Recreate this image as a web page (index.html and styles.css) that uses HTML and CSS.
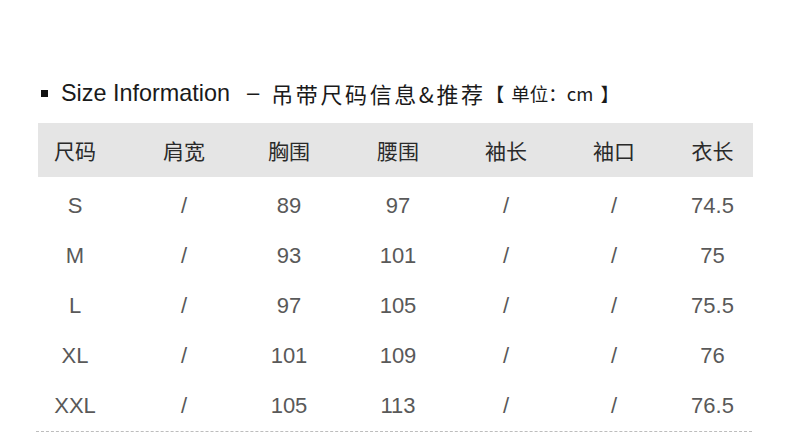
FILE: index.html
```html
<!DOCTYPE html>
<html lang="zh">
<head>
<meta charset="utf-8">
<link rel="stylesheet" href="styles.css">
</head>
<body>
<div class="page">
  <div class="title">
    <span class="bullet"></span>
    <span class="en">Size Information</span>
    <span class="dash">–</span>
    <span class="cn">吊带尺码信息&amp;推荐</span>
    <span class="unit">【 单位：cm 】</span>
  </div>
  <div class="table">
    <div class="row head">
      <div class="cell first">尺码</div>
      <div class="cell">肩宽</div>
      <div class="cell">胸围</div>
      <div class="cell">腰围</div>
      <div class="cell">袖长</div>
      <div class="cell">袖口</div>
      <div class="cell">衣长</div>
    </div>
    <div class="row">
      <div class="cell first">S</div><div class="cell">/</div><div class="cell">89</div><div class="cell">97</div><div class="cell">/</div><div class="cell">/</div><div class="cell">74.5</div>
    </div>
    <div class="row">
      <div class="cell first">M</div><div class="cell">/</div><div class="cell">93</div><div class="cell">101</div><div class="cell">/</div><div class="cell">/</div><div class="cell">75</div>
    </div>
    <div class="row">
      <div class="cell first">L</div><div class="cell">/</div><div class="cell">97</div><div class="cell">105</div><div class="cell">/</div><div class="cell">/</div><div class="cell">75.5</div>
    </div>
    <div class="row">
      <div class="cell first">XL</div><div class="cell">/</div><div class="cell">101</div><div class="cell">109</div><div class="cell">/</div><div class="cell">/</div><div class="cell">76</div>
    </div>
    <div class="row">
      <div class="cell first">XXL</div><div class="cell">/</div><div class="cell">105</div><div class="cell">113</div><div class="cell">/</div><div class="cell">/</div><div class="cell">76.5</div>
    </div>
  </div>
  <div class="rule"></div>
</div>
</body>
</html>
```
FILE: styles.css
```css
html, body {
  margin: 0;
  padding: 0;
  background: #ffffff;
}
.page {
  width: 790px;
  height: 436px;
  padding: 80px 0 0 38px;
  box-sizing: border-box;
  font-family: "Liberation Sans", "Noto Sans CJK SC", sans-serif;
  overflow: hidden;
}
.title {
  display: flex;
  align-items: center;
  height: 26px;
  color: #1a1a1a;
  white-space: nowrap;
}
.bullet {
  width: 7px;
  height: 7px;
  background: #111;
  margin: 1px 0 0 3px;
}
.en {
  font-size: 23.4px;
  margin-left: 13px;
}
.dash {
  font-size: 22px;
  margin-left: 17px;
}
.cn {
  font-family: "Noto Sans CJK SC", sans-serif;
  font-size: 22px;
  letter-spacing: 2.6px;
  margin-left: 12px;
}
.unit {
  font-family: "Noto Sans CJK SC", sans-serif;
  font-size: 18.5px;
  word-spacing: 3px;
  margin-left: 0;
}
.unit-cm {
  font-family: "Liberation Sans", sans-serif;
}
.table {
  width: 715px;
  margin-top: 17px;
}
.row {
  display: grid;
  grid-template-columns: 92px 108px 102px 116px 100px 116px 81px;
  height: 50px;
  align-items: center;
  font-size: 22px;
  color: #595959;
}
.row.head {
  height: 54px;
  margin-bottom: 4px;
  background: #e5e5e5;
  color: #2a2a2a;
  font-family: "Noto Sans CJK SC", sans-serif;
  font-size: 21px;
}
.cell {
  text-align: center;
  line-height: 1;
}
.cell.first {
  padding-right: 18px;
}
.rule {
  width: 716px;
  margin-left: -2px;
  border-top: 1px dashed #bdbdbd;
}
```
